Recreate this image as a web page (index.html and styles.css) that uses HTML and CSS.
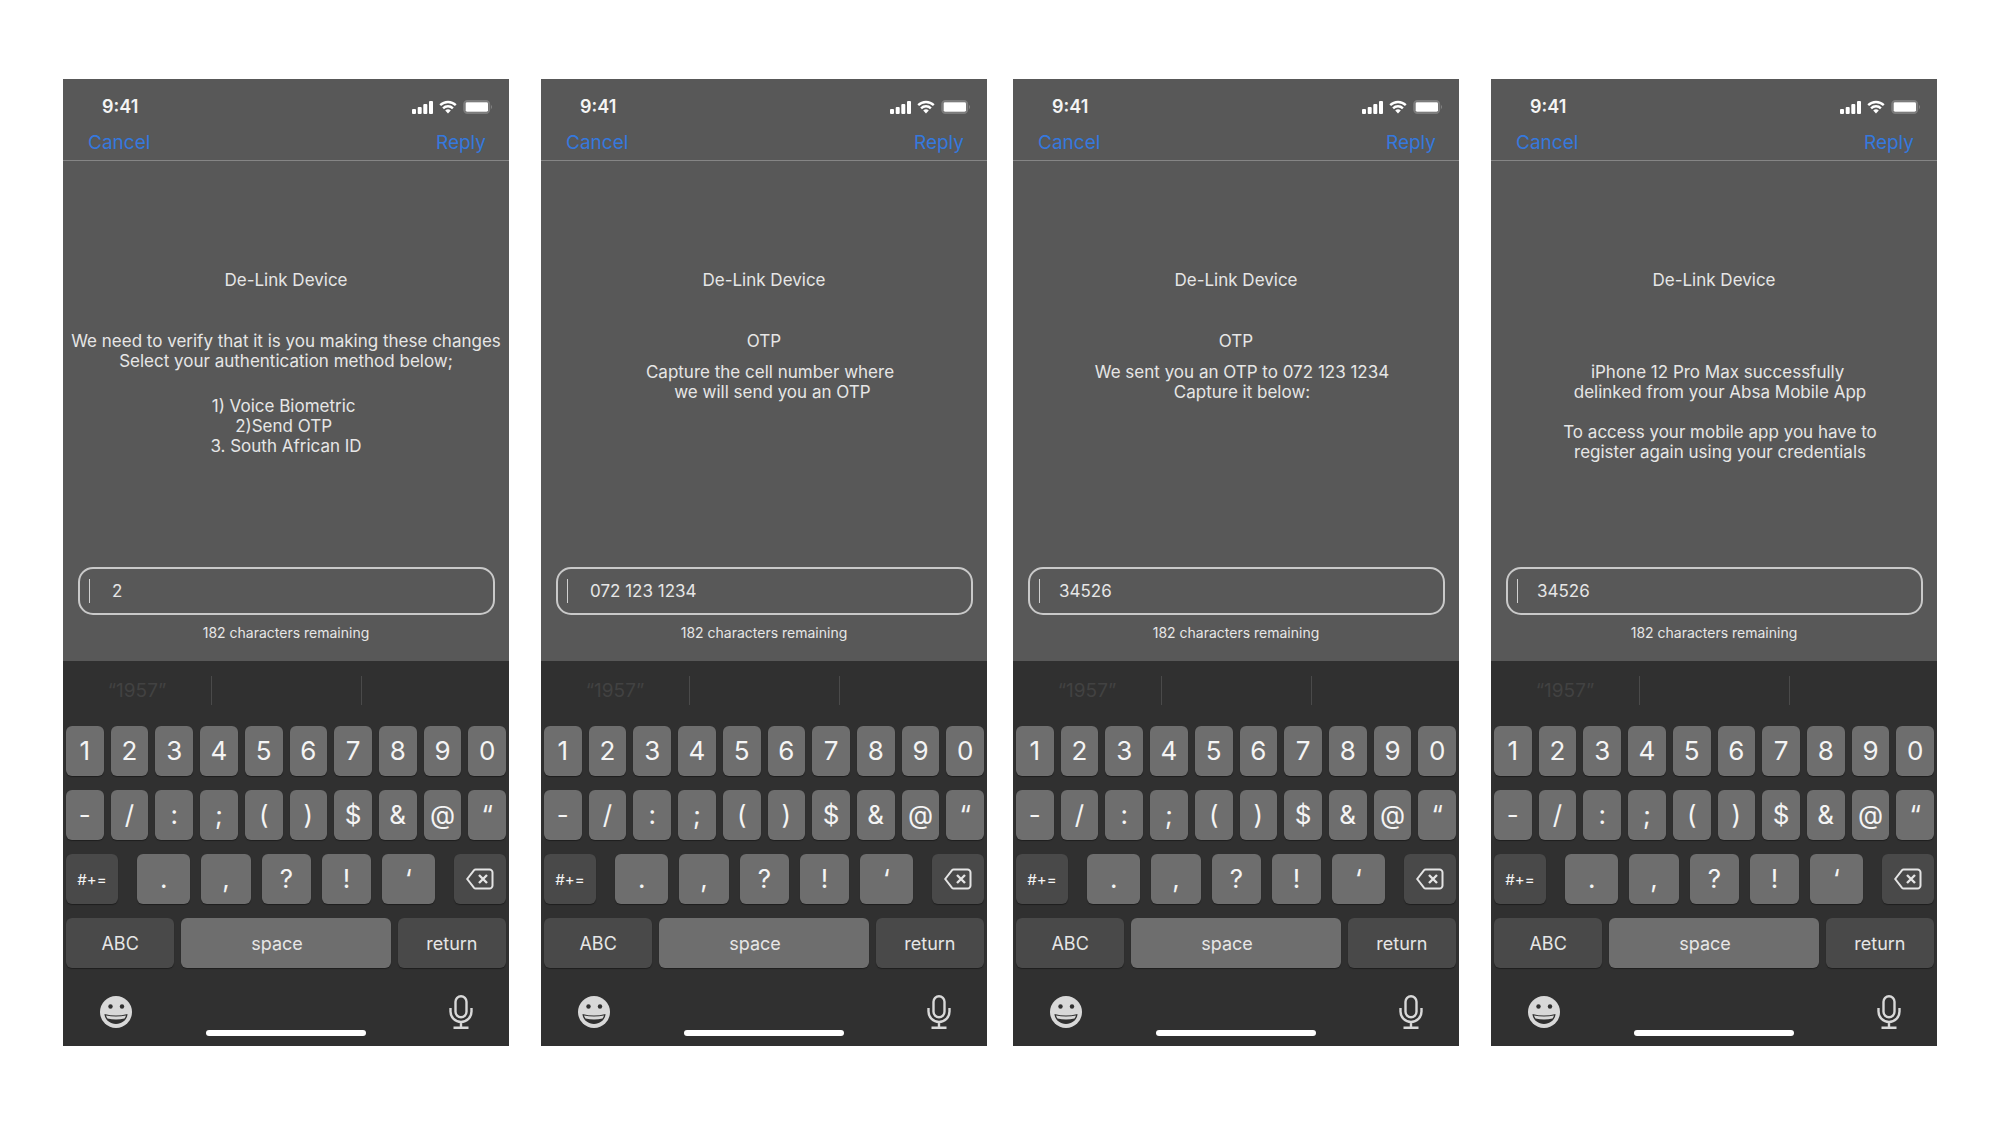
FILE: index.html
```html
<!DOCTYPE html>
<html lang="en">
<head>
  <meta charset="UTF-8" />
  <meta name="viewport" content="width=device-width, initial-scale=1" />
  <title>De-Link Device</title>
  <link rel="stylesheet" href="styles.css">
</head>
<body>
  <main class="board">
    <div class="pair">
      <section class="phone">
        <div class="screen">
          <div class="message">
            <h2>De-Link Device</h2>
            <p class="intro">We need to verify that it is you making these changes<br />Select your authentication method below;</p>
            <p class="options">1) Voice Biometric&nbsp;<br />2)Send OTP&nbsp;<br />3. South African ID</p>
          </div>
          <label class="reply-box">
            <span class="caret"></span>
            <input type="text" value="2" aria-label="Your reply" />
          </label>
          <p class="remaining">182 characters remaining</p>
        </div>
      </section>

      <section class="phone">
        <div class="screen">
          <div class="message">
            <h2>De-Link Device</h2>
            <h3>OTP</h3>
            <p class="details">Capture the cell number where<br />&nbsp;we will send you an OTP</p>
          </div>
          <label class="reply-box">
            <span class="caret"></span>
            <input type="text" value="072 123 1234" aria-label="Your reply" />
          </label>
          <p class="remaining">182 characters remaining</p>
        </div>
      </section>
    </div>

    <div class="pair">
      <section class="phone">
        <div class="screen">
          <div class="message">
            <h2>De-Link Device</h2>
            <h3>OTP</h3>
            <p class="details">We sent you an OTP to 072 123 1234<br />Capture it below:</p>
          </div>
          <label class="reply-box code">
            <span class="caret"></span>
            <input type="text" value="34526" aria-label="Your reply" />
          </label>
          <p class="remaining">182 characters remaining</p>
        </div>
      </section>

      <section class="phone">
        <div class="screen">
          <div class="message">
            <h2>De-Link Device</h2>
            <p class="details result">iPhone 12 Pro Max successfully&nbsp;<br />delinked from your Absa Mobile App<br /><br />To access your mobile app you have to<br />register again using your credentials</p>
          </div>
          <label class="reply-box code">
            <span class="caret"></span>
            <input type="text" value="34526" aria-label="Your reply" />
          </label>
          <p class="remaining">182 characters remaining</p>
        </div>
      </section>
    </div>
  </main>

  <!-- Status bar and Cancel / Reply, same on every phone -->
  <template id="top-template">
    <header>
      <div class="status-bar">
        <span class="time">9:41</span>
        <div class="status-icons">
          <svg class="signal" viewBox="0 0 21 14" width="21" height="14" aria-hidden="true">
            <rect x="0" y="9" width="4" height="5" rx="1" />
            <rect x="5.7" y="7" width="4" height="7" rx="1" />
            <rect x="11.3" y="4" width="4" height="10" rx="1" />
            <rect x="17" y="1" width="4" height="13" rx="1" />
          </svg>
          <svg class="wifi" viewBox="0 0 18 14" width="18" height="14" aria-hidden="true">
            <path d="M1.2 5.2a11.2 11.2 0 0 1 15.6 0" />
            <path d="M4.1 8.3a7 7 0 0 1 9.8 0" />
            <path class="dot" d="M9 13.4 6.2 10.6a4 4 0 0 1 5.6 0z" />
          </svg>
          <svg class="battery" viewBox="0 0 29 14" width="29" height="14" aria-hidden="true">
            <rect class="shell" x="1.2" y="1" width="25" height="12" rx="3.2" />
            <rect x="2.600" y="2.300" width="22.400" height="9.400" rx="1.4" />
            <path class="nub" d="M28 5v4c1-.6 1-3.400 0-4z" />
          </svg>
        </div>
      </div>
      <nav class="actions">
        <a href="#">Cancel</a>
        <a href="#">Reply</a>
      </nav>
    </header>
  </template>

  <!-- Numeric keyboard -->
  <template id="keyboard-template">
    <div class="keyboard">
      <div class="suggestions">
        <span>“1957”</span>
        <span></span>
        <span></span>
      </div>
      <div class="keys">
        <div class="row">
          <button>1</button>
          <button>2</button>
          <button>3</button>
          <button>4</button>
          <button>5</button>
          <button>6</button>
          <button>7</button>
          <button>8</button>
          <button>9</button>
          <button>0</button>
        </div>
        <div class="row">
          <button>-</button>
          <button>/</button>
          <button>:</button>
          <button>;</button>
          <button>(</button>
          <button>)</button>
          <button>$</button>
          <button>&amp;</button>
          <button>@</button>
          <button>“</button>
        </div>
        <div class="row row-punctuation">
          <button class="dark symbols">#+=</button>
          <div class="punctuation">
            <button>.</button>
            <button>,</button>
            <button>?</button>
            <button>!</button>
            <button>‘</button>
          </div>
          <button class="dark" aria-label="Delete">
            <svg class="delete" viewBox="0 0 28 22" width="28" height="22" aria-hidden="true">
              <path d="M9.600 1.500H23.500a3 3 0 0 1 3 3v13a3 3 0 0 1-3 3H9.600a2 2 0 0 1-1.500-.7L1.200 11l6.900-8.800a2 2 0 0 1 1.500-.7z" />
              <path class="cross" d="m13 7 8 8m0-8-8 8" />
            </svg>
          </button>
        </div>
        <div class="row row-space">
          <button class="dark word">ABC</button>
          <button class="word space">space</button>
          <button class="dark word">return</button>
        </div>
      </div>
      <div class="bottom">
        <button class="plain" aria-label="Emoji">
          <svg class="emoji" viewBox="0 0 32 32" width="32" height="34" aria-hidden="true">
            <circle class="face" cx="16" cy="16" r="16" />
            <circle cx="10.500" cy="10.500" r="2.200" />
            <circle cx="22" cy="10.500" r="2.200" />
            <path d="M4.500 18q11.500 3 23 0c0 5-5 10-11.500 10S4.500 23 4.500 18z" />
            <path class="face" d="M6 19.500q10 2.200 20 0c-.3 1-.8 2-1.500 3q-8.500 1.800-17 0c-.7-1-1.200-2-1.500-3z" />
          </svg>
        </button>
        <button class="plain" aria-label="Dictate">
          <svg class="mic" viewBox="0 0 24 34" width="24" height="34" aria-hidden="true">
            <rect x="6.500" y="1.200" width="11" height="21" rx="5.500" />
            <path d="M1.500 13v3.500a10.500 10.500 0 0 0 21 0V13M12 27v5.500M4.500 32.700h15" />
          </svg>
        </button>
      </div>
      <div class="home-indicator"></div>
    </div>
  </template>

  <script src="script.js"></script>
</body>
</html>
```
FILE: styles.css
```css
* {
  box-sizing: border-box;
}

body {
  margin: 0;
  background-color: #fff;
  font-family: Inter, "Liberation Sans", sans-serif;
  color: #e6e6e6;
}

h2, h3, p {
  margin: 0;
  font-size: 17px;
  font-weight: 400;
  line-height: 20px;
}

/* === Board with the four phones === */
.board {
  display: grid;
  grid-template-columns: 1fr 1fr;
  gap: 26px;
  padding: 79px 64px 79px 63px;
}

.pair {
  display: grid;
  grid-template-columns: 1fr 1fr;
  gap: 32px;
}

.phone {
  display: flex;
  flex-direction: column;
  background-color: #585858;
}

/* === Top === */
.status-bar {
  display: flex;
  justify-content: space-between;
  align-items: center;
  padding: 16px 17px 0 39px;
}

.time {
  font-size: 18px;
  font-weight: 600;
  line-height: 24px;
  color: #f4f4f4;
}

.status-icons {
  display: flex;
  gap: 6px;
}

.status-icons svg {
  fill: #fff;
}

.status-icons .wifi {
  fill: none;
  stroke: #fff;
  stroke-width: 2.4;
}

.status-icons .dot {
  fill: #fff;
  stroke: none;
}

.status-icons .shell {
  fill: none;
  stroke: #7c7c7c;
  stroke-width: 2;
}

.status-icons .nub {
  fill: #909090;
}

.actions {
  display: flex;
  justify-content: space-between;
  padding: 12px 23px 5px 25px;
  border-bottom: 1px solid #858585;
}

.actions a {
  font-size: 19px;
  line-height: 24px;
  color: #3578de;
  text-decoration: none;
}

/* === Message === */
.screen {
  flex: 1;
  padding-bottom: 18px;
}

.message {
  min-height: 406px;
  padding-top: 109px;
  text-align: center;
  white-space: nowrap;
}

.intro, .message h3 {
  margin-top: 41px;
}

.options {
  margin-top: 25px;
}

.details {
  margin-top: 11px;
  padding-left: 12px;
}

.result {
  margin-top: 72px;
}

.reply-box {
  display: flex;
  align-items: center;
  gap: 22px;
  height: 48px;
  margin: 0 14px 0 15px;
  padding: 0 9px;
  border: 2px solid #c9c9c9;
  border-radius: 15px;
}

.code {
  gap: 19px;
}

.caret {
  width: 1px;
  height: 24px;
  background-color: #d0d0d0;
}

.reply-box input {
  flex: 1;
  min-width: 0;
  padding: 0;
  border: none;
  outline: none;
  background: none;
  font: inherit;
  font-size: 17px;
  color: inherit;
}

.remaining {
  margin-top: 8px;
  font-size: 14px;
  text-align: center;
}

/* === Keyboard === */
.keyboard {
  padding-bottom: 10px;
  background-color: #303030;
}

.suggestions {
  display: grid;
  grid-template-columns: 148fr 150fr 148fr;
  padding: 15px 0 21px;
}

.suggestions span {
  height: 29px;
  font-size: 19px;
  line-height: 29px;
  text-align: center;
  color: #424242;
}

.suggestions span + span {
  border-left: 1px solid #4a4a4a;
}

.keys {
  display: grid;
  gap: 14px;
  padding: 0 3px;
}

.row {
  display: grid;
  grid-template-columns: repeat(10, 1fr);
  gap: 7px;
}

.row-punctuation {
  grid-template-columns: 52fr 298fr 52fr;
  gap: 19px;
}

.punctuation {
  display: grid;
  grid-template-columns: 53fr 49fr 49fr 48fr 53fr;
  gap: 11px;
}

.row-space {
  grid-template-columns: 108fr 209fr 108fr;
}

button {
  display: flex;
  justify-content: center;
  align-items: center;
  height: 50px;
  padding: 0 0 2px;
  border: none;
  border-radius: 6px;
  background-color: #6e6e6e;
  box-shadow: 0 1px 1px #1f1f1f;
  font-family: inherit;
  font-size: 26px;
  color: #f4f4f4;
}

.dark {
  padding: 0;
  background-color: #494949;
}

.word {
  padding: 0;
  font-size: 18px;
  color: #e6e6e6;
}

.space {
  padding-right: 18px;
}

.symbols {
  font-size: 15px;
}

.delete {
  fill: none;
  stroke: #e4e4e4;
  stroke-width: 2;
}

.delete .cross {
  stroke-width: 2.4;
}

.bottom {
  display: flex;
  justify-content: space-between;
  padding: 27px 36px 1px 37px;
}

.plain {
  height: 34px;
  padding: 0;
  background: none;
  box-shadow: none;
}

.emoji {
  fill: #303030;
}

.emoji .face {
  fill: #d8d8d8;
}

.mic {
  fill: none;
  stroke: #d8d8d8;
  stroke-width: 2.4;
}

.home-indicator {
  width: 36%;
  height: 6px;
  margin: 0 auto;
  border-radius: 3px;
  background-color: #fff;
}
```
FILE: script.js
```js
const topTemplate = document.getElementById('top-template');
const keyboardTemplate = document.getElementById('keyboard-template');

// Every phone gets the same top and keyboard around its own screen
document.querySelectorAll('.phone').forEach((phone) => {
  phone.prepend(topTemplate.content.cloneNode(true));
  phone.append(keyboardTemplate.content.cloneNode(true));
});
```
